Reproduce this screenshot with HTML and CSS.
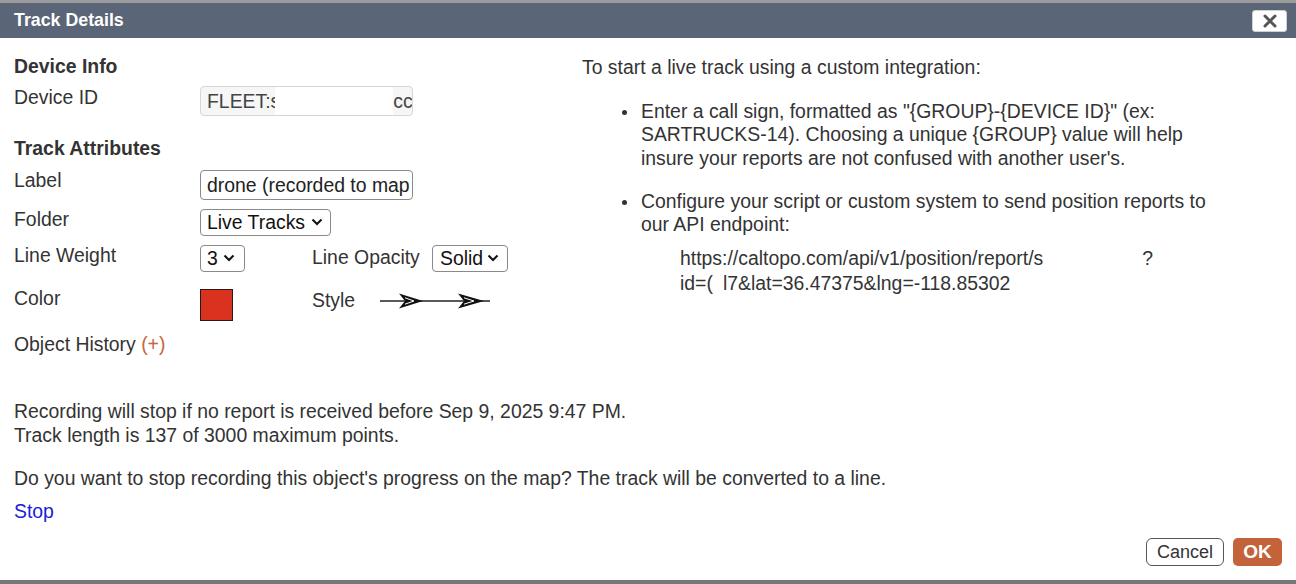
FILE: index.html
```html
<!DOCTYPE html>
<html lang="en">
<head>
<meta charset="utf-8">
<title>Track Details</title>
<link rel="stylesheet" href="styles.css">
</head>
<body>
<div class="map-strip top"></div>
<div class="dialog">
  <div class="titlebar">
    <span class="title">Track Details</span>
    <button class="close" aria-label="Close">
      <svg width="14" height="14" viewBox="0 0 14 14"><path d="M2 2 L12 12 M12 2 L2 12" stroke="#555" stroke-width="3" stroke-linecap="round"/></svg>
    </button>
  </div>
  <div class="content">
    <div class="columns">
      <div class="left">
        <h3 class="heading">Device Info</h3>
        <div class="form-grid device-grid">
          <div class="lbl">Device ID</div>
          <div class="field readonly span3">FLEET:s<span class="redact"></span>cc</div>
        </div>
        <h3 class="heading attrs">Track Attributes</h3>
        <div class="form-grid attr-grid">
          <div class="lbl">Label</div>
          <div class="field text span3">drone (recorded to map</div>

          <div class="lbl">Folder</div>
          <div class="span3"><div class="select folder">Live Tracks<svg class="chev" width="12" height="8" viewBox="0 0 12 8"><path d="M1.5 1.5 L6 6 L10.5 1.5" fill="none" stroke="#111" stroke-width="2"/></svg></div></div>

          <div class="lbl">Line Weight</div>
          <div><div class="select weight">3<svg class="chev" width="12" height="8" viewBox="0 0 12 8"><path d="M1.5 1.5 L6 6 L10.5 1.5" fill="none" stroke="#111" stroke-width="2"/></svg></div></div>
          <div class="lbl2 opacity-lbl">Line Opacity</div>
          <div><div class="select opacity">Solid<svg class="chev" width="12" height="8" viewBox="0 0 12 8"><path d="M1.5 1.5 L6 6 L10.5 1.5" fill="none" stroke="#111" stroke-width="2"/></svg></div></div>

          <div class="lbl color-row">Color</div>
          <div class="color-row"><div class="swatch"></div></div>
          <div class="lbl2 color-row">Style</div>
          <div class="color-row style-cell">
            <svg width="112" height="18" viewBox="0 0 112 18">
              <line x1="0" y1="9" x2="110" y2="9" stroke="#222" stroke-width="1.6"/>
              <path d="M19 1.5 L43 9 L19 16.5 L25 9 Z" fill="#111"/>
              <path d="M25 5.8 L34 9 L25 12.2" fill="none" stroke="#fff" stroke-width="1"/>
              <path d="M78 1.5 L104 9 L78 16.5 L84 9 Z" fill="#111"/>
              <path d="M84 5.8 L94 9 L84 12.2" fill="none" stroke="#fff" stroke-width="1"/>
            </svg>
          </div>
        </div>
        <div class="history">Object History <span class="plus">(+)</span></div>
      </div>
      <div class="right">
        <p class="intro">To start a live track using a custom integration:</p>
        <ul class="steps">
          <li><div>Enter a call sign, formatted as "{GROUP}-{DEVICE ID}" (ex:<br>SARTRUCKS-14). Choosing a unique {GROUP} value will help<br>insure your reports are not confused with another user's.</div></li>
          <li><div>Configure your script or custom system to send position reports to<br>our API endpoint:
            <div class="url">https://caltopo.com/api/v1/position/report/s<span class="redact-url"></span>?<br>id=(<span class="redact-id"></span>l7&amp;lat=36.47375&amp;lng=-118.85302</div>
          </div></li>
        </ul>
      </div>
    </div>
    <div class="status">
      <p class="rec">Recording will stop if no report is received before Sep 9, 2025 9:47 PM.<br>Track length is 137 of 3000 maximum points.</p>
      <p class="question">Do you want to stop recording this object's progress on the map? The track will be converted to a line.</p>
      <a class="stop" href="#">Stop</a>
    </div>
    <div class="footer">
      <button class="btn cancel">Cancel</button>
      <button class="btn ok">OK</button>
    </div>
  </div>
</div>
<div class="map-strip bottom"></div>
</body>
</html>
```

FILE: styles.css
```css
* { box-sizing: border-box; }
html, body {
  margin: 0;
  padding: 0;
  width: 1296px;
  height: 584px;
  overflow: hidden;
  background: #ffffff;
  font-family: "Liberation Sans", Arial, sans-serif;
  color: #333;
}
.map-strip.top { height: 3px; background: #9b9b9b; }
.map-strip.bottom { height: 4px; background: #777; }

.dialog {
  height: 577px;
  display: flex;
  flex-direction: column;
  background: #fff;
}
.titlebar {
  height: 35px;
  background: #5a6677;
  display: flex;
  align-items: center;
  justify-content: space-between;
  padding: 0 9px 0 14px;
  flex: none;
}
.title {
  color: #fff;
  font-weight: bold;
  font-size: 17.8px;
}
.close {
  width: 35px;
  height: 22px;
  background: #fff;
  border: 1px solid #d0d0d0;
  border-radius: 3px;
  padding: 0;
  display: flex;
  align-items: center;
  justify-content: center;
  margin-top: 1px;
}

.content {
  flex: 1;
  padding: 16px 14px 0 14px;
  font-size: 19.4px;
  line-height: 24px;
}
.columns {
  display: grid;
  grid-template-columns: 568px 1fr;
}
.heading {
  margin: 0;
  font-size: 19.4px;
  font-weight: bold;
  line-height: 24px;
  color: #333;
}
.heading.attrs { margin-top: 20px; }

.form-grid {
  display: grid;
  grid-template-columns: 186px 112px 120px auto;
  align-items: start;
  row-gap: 9px;
}
.device-grid { margin-top: 8px; }
.attr-grid { margin-top: 9.5px; }
.span3 { grid-column: span 3; }
.lbl { line-height: 24px; margin-top: -1.5px; }
.lbl2 { line-height: 24px; }
.opacity-lbl { margin-top: 0.5px; }

.field {
  width: 213px;
  height: 30px;
  border-radius: 4px;
  padding: 0 6px;
  white-space: nowrap;
  overflow: hidden;
  line-height: 28px;
  color: #222;
}
.field.readonly {
  background: #f6f6f6;
  border: 1px solid #d6d6d6;
  color: #444;
}
.field.text {
  background: #fff;
  border: 1px solid #8a8a8a;
}
.redact {
  display: inline-block;
  width: 118px;
  height: 28px;
  background: #fff;
  vertical-align: top;
  margin-left: -5px;
}

.select {
  display: inline-flex;
  align-items: center;
  height: 27px;
  border: 1px solid #8a8a8a;
  border-radius: 4px;
  background: #fff;
  padding: 0 5px 0 6px;
  color: #111;
  line-height: 25px;
  white-space: nowrap;
}
.select .chev { margin-left: 6px; }
.select.folder { width: 131px; }
.select.weight { width: 45px; }
.select.opacity { width: 76px; padding-left: 7px; }
.select.opacity .chev { margin-left: 4px; }
.select.weight .chev { margin-left: 5px; }

.color-row { margin-top: 7px; }
.lbl.color-row { margin-top: 5.5px; }
.swatch {
  width: 33px;
  height: 32px;
  background: #d9321f;
  border: 1.5px solid #2a1a16;
  margin-top: 1px;
}
.style-cell {
  padding-top: 3px;
  margin-left: -52px;
}

.history { margin-top: 11.5px; }
.plus { color: #c8643c; }

.right { padding-top: 1px; }
.intro { margin: 0; }
.steps {
  list-style: none;
  margin: 20.5px 0 0 0;
  padding: 0 0 0 40px;
  line-height: 23.5px;
  white-space: nowrap;
}
.steps li {
  display: flex;
  align-items: flex-start;
}
.steps li + li { margin-top: 19.5px; }
.steps li::before {
  content: "";
  flex: none;
  width: 5px;
  height: 5px;
  border-radius: 50%;
  background: #333;
  margin-top: 10px;
  margin-right: 14px;
}
.url {
  margin-top: 9.5px;
  padding-left: 39px;
  line-height: 24.5px;
}
.redact-url { display: inline-block; width: 99px; }
.redact-id { display: inline-block; width: 10px; }

.status { margin-top: 43px; }
.status p { margin: 0; }
.question { margin-top: 19px !important; }
.stop {
  display: inline-block;
  margin-top: 9px;
  color: #2020d8;
  text-decoration: none;
}

.footer {
  display: flex;
  justify-content: flex-end;
  gap: 9px;
  margin-top: 15px;
}
.btn {
  height: 28px;
  font-family: "Liberation Sans", Arial, sans-serif;
  font-size: 18px;
  padding: 0;
  cursor: pointer;
}
.cancel {
  width: 78px;
  background: #fff;
  border: 1px solid #555;
  border-radius: 6px;
  color: #333;
}
.ok {
  width: 49px;
  background: #c4623a;
  border: none;
  border-radius: 5px;
  color: #fff;
  font-weight: bold;
  font-size: 19px;
}
```
